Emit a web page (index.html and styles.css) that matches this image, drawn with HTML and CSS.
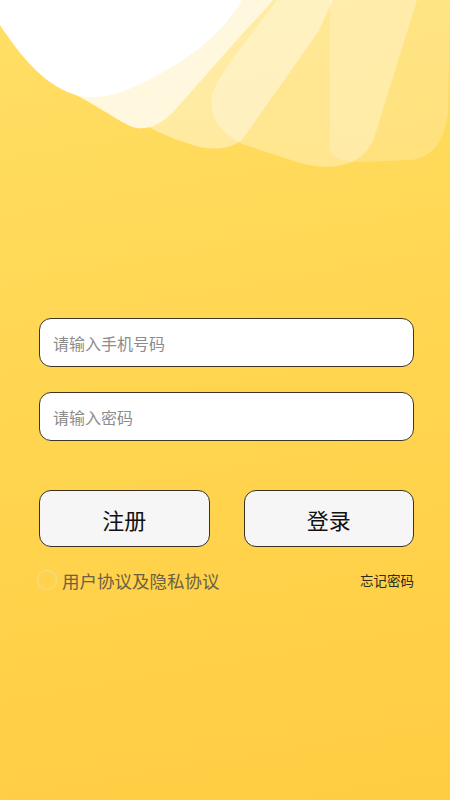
FILE: index.html
```html
<!DOCTYPE html>
<html lang="zh-CN">
<head>
    <meta charset="UTF-8">
    <meta name="viewport" content="width=device-width, initial-scale=1.0">
    <title>登录</title>
    <link rel="stylesheet" href="styles.css">
</head>
<body>
    <div class="page">
        <div class="top">
            <svg class="waves" width="450" height="180" viewBox="0 0 450 180">
                <path fill="#fff" fill-opacity="0.22" d="M330,0 L330,150 C333,159 345,162 360,162 L410,160 C435,158 446,135 448,110 L450,0 Z"/>
                <path fill="#fff" fill-opacity="0.32" d="M277,0 C255,30 228,62 216,85 C204,107 215,132 245,145 L300,163 C330,171 362,168 374,138 L417,0 Z"/>
                <path fill="#fff" fill-opacity="0.42" d="M148,0 L148,127 C168,137 185,143 200,147 C215,150 230,149 242,140 L318,32 L333,0 Z"/>
                <path fill="#fff8de" d="M72,0 L72,93 C95,104 110,116 130,126 C145,132 160,126 175,110 L243,33 C255,20 265,10 273,0 Z"/>
                <path fill="#fff" d="M0,0 L0,25 C20,55 45,88 80,96 C110,102 140,85 170,68 C200,50 225,30 242,0 Z"/>
            </svg>
        </div>
        <div class="form">
            <input class="field" type="text" placeholder="请输入手机号码">
            <input class="field" type="password" placeholder="请输入密码">
            <div class="btns">
                <button class="btn">注册</button>
                <button class="btn">登录</button>
            </div>
            <div class="extra">
                <label class="agree">
                    <span class="radio"></span>
                    <span>用户协议及隐私协议</span>
                </label>
                <a class="forget">忘记密码</a>
            </div>
        </div>
    </div>
</body>
</html>
```
FILE: styles.css
```css
*{
    padding: 0;
    margin: 0;
    box-sizing: border-box;
}
body{
    font-family: "Noto Sans CJK SC", "Noto Sans", sans-serif;
}
.page{
    width: 450px;
    min-height: 800px;
    background: linear-gradient(170deg, #ffdf66 0%, #ffd651 45%, #ffcd42 100%);
}
.top{
    height: 318px;
}
.waves{
    display: block;
}
.form{
    padding: 0 36px 0 39px;
}
.field{
    display: block;
    width: 100%;
    height: 49px;
    margin-bottom: 25px;
    padding: 0 13px;
    border: 1.5px solid #3f3524;
    border-radius: 12px;
    background-color: #fff;
    font-family: inherit;
    font-size: 16px;
    color: #333;
    outline: none;
}
.field::placeholder{
    color: #8c8c8c;
}
.btns{
    display: flex;
    gap: 34px;
    margin-top: 49px;
}
.btn{
    flex: 1;
    height: 57px;
    border: 1.5px solid #3a3122;
    border-radius: 12px;
    background-color: #f6f6f6;
    font-family: inherit;
    font-size: 22px;
    color: #111;
}
.extra{
    display: flex;
    justify-content: space-between;
    align-items: center;
    margin-top: 21px;
    height: 24px;
}
.agree{
    display: flex;
    align-items: center;
    gap: 5px;
    margin-left: -2px;
    font-size: 17.5px;
    color: #6b6143;
}
.radio{
    width: 20px;
    height: 20px;
    border-radius: 50%;
    border: 1.5px solid rgba(235, 222, 180, 0.85);
}
.forget{
    font-size: 13.5px;
    color: #2d2a22;
}
```
